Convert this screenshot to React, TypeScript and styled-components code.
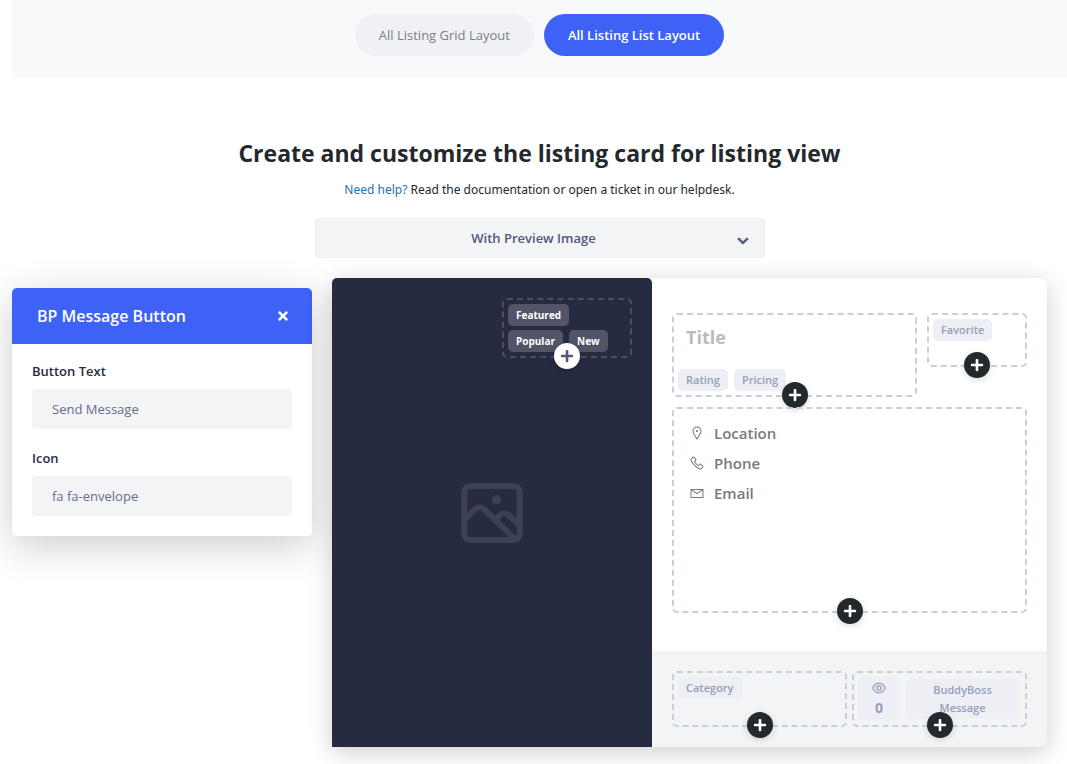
import React from 'react';
import styled, { createGlobalStyle, css } from 'styled-components';
import { FaChevronDown, FaPlus, FaTimes } from 'react-icons/fa';
import { LiaEnvelope, LiaMapMarkerSolid, LiaPhoneSolid } from 'react-icons/lia';

const GlobalStyle = createGlobalStyle`
  *, *::before, *::after { box-sizing: border-box; }
  body {
    margin: 0;
    background: #fff;
    color: #23282d;
    font-family: 'Segoe UI', 'Open Sans', 'Noto Sans', sans-serif;
    font-size: 13px;
  }
  button, input, select { font-family: inherit; margin: 0; }
`;

const Page = styled.main`
  padding-left: 12px;
`;

const Switcher = styled.nav`
  display: flex;
  justify-content: center;
  gap: 10px;
  padding: 14px 0 22px;
  background: #f8f9fb;
`;

const SwitchButton = styled.button<{ $active?: boolean }>`
  height: 42px;
  padding: 0 24px;
  border: 0;
  border-radius: 21px;
  font-size: 13px;
  line-height: 20px;
  cursor: pointer;
  ${({ $active }) =>
    $active
      ? css`background: #3e62f5; color: #fff; font-weight: 600;`
      : css`background: #f0f1f6; color: #7b7f85; font-weight: 500;`}
`;

const Intro = styled.header`
  display: flex;
  flex-direction: column;
  align-items: center;
  padding: 59px 20px 20px;
`;

const Heading = styled.h1`
  margin: 0;
  font-size: 23px;
  line-height: 32px;
  font-weight: 700;
  text-align: center;
`;

const Help = styled.p`
  margin: 11px 0 18px;
  font-family: 'Segoe UI', 'Noto Sans', sans-serif;
  font-size: 12px;
  line-height: 20px;
`;

const HelpLink = styled.a`
  color: #2271b1;
  text-decoration: none;
`;

const SelectWrap = styled.div`
  position: relative;
  width: 100%;
  max-width: 450px;
`;

const LayoutSelect = styled.select`
  appearance: none;
  display: block;
  width: 100%;
  height: 40px;
  padding: 0 28px 0 16px;
  border: 1px solid #eeeff4;
  border-radius: 4px;
  background: #f3f4f6;
  color: #51587c;
  font-size: 13px;
  font-weight: 600;
  text-align: center;
  text-align-last: center;
`;

const SelectArrow = styled(FaChevronDown)`
  position: absolute;
  right: 16px;
  top: 17px;
  width: 12px;
  height: 12px;
  color: #51587c;
  stroke: #51587c;
  stroke-width: 30px;
  pointer-events: none;
`;

const Workspace = styled.div`
  display: flex;
  align-items: flex-start;
  gap: 20px;
  padding: 0 20px 17px 0;
`;

const Panel = styled.section`
  flex: 0 0 300px;
  margin-top: 10px;
  border-radius: 5px;
  background: #fff;
  box-shadow: 0 10px 40px rgba(0, 0, 0, 0.2);
`;

const PanelHeader = styled.div`
  display: flex;
  align-items: center;
  justify-content: space-between;
  height: 56px;
  padding: 0 22px 0 25px;
  border-radius: 5px 5px 0 0;
  background: #3e62f5;
  color: #fff;
`;

const PanelTitle = styled.h2`
  margin: 0;
  font-size: 16px;
  line-height: 24px;
  font-weight: 600;
`;

const CloseButton = styled.button`
  display: flex;
  padding: 0;
  border: 0;
  background: none;
  color: inherit;
  font-size: 14px;
  cursor: pointer;
`;

const PanelBody = styled.form`
  display: flex;
  flex-direction: column;
  gap: 22px;
  padding: 20px;
`;

const Field = styled.div`
  display: flex;
  flex-direction: column;
  gap: 10px;
`;

const FieldLabel = styled.label`
  color: #272b41;
  font-size: 13px;
  line-height: 15px;
  font-weight: 600;
`;

const FieldInput = styled.input`
  width: 100%;
  height: 40px;
  padding: 0 20px;
  border: 0;
  border-radius: 4px;
  background: #f3f4f6;
  color: #666b8c;
  font-size: 13px;
`;

const Card = styled.section`
  flex: 1;
  min-width: 0;
  display: flex;
  border-radius: 8px;
  background: #fff;
  box-shadow: 0 5px 25px rgba(0, 0, 0, 0.2);
`;

const Thumbnail = styled.div`
  flex: 0 0 320px;
  display: grid;
  padding: 20px;
  border-radius: 5px 5px 0 0;
  background: #272b41;
  > * { grid-area: 1 / 1; }
`;

const Placeholder = styled.svg`
  place-self: center;
  width: 74px;
  height: 72px;
  fill: #3d4155;
`;

const Content = styled.div`
  flex: 1;
  min-width: 0;
  display: flex;
  flex-direction: column;
`;

const Body = styled.div`
  display: flex;
  flex-direction: column;
  gap: 10px;
  padding: 35px 20px 38px;
`;

const Row = styled.div<{ $gap: number }>`
  display: flex;
  align-items: flex-start;
  gap: ${({ $gap }) => $gap}px;
`;

const Footer = styled.div`
  padding: 20px;
  border-radius: 0 0 8px 0;
  background: #f3f4f6;
`;

const Zone = styled.div<{ $minHeight: number; $width?: number; $dark?: boolean }>`
  position: relative;
  ${({ $width }) => ($width ? `flex: 0 0 ${$width}px; width: ${$width}px;` : 'flex: 1 1 auto;')}
  min-width: 0;
  min-height: ${({ $minHeight }) => $minHeight}px;
  padding: 4px;
  border: 2px dashed ${({ $dark }) => ($dark ? '#4b4f63' : '#c6d0dc')};
  border-radius: 5px;
`;

const BadgeZone = styled(Zone)`
  place-self: start end;
`;

const TitleZone = styled(Zone)`
  display: flex;
  flex-direction: column;
  justify-content: space-between;
`;

const HalfZone = styled(Zone)`
  flex: 1 1 0;
`;

const Tags = styled.div`
  display: flex;
  flex-wrap: wrap;
  gap: 4px 6px;
`;

const Tag = styled.span<{ $dark?: boolean }>`
  padding: 0 8px;
  border-radius: 5px;
  line-height: 22px;
  ${({ $dark }) =>
    $dark
      ? css`background: #525567; color: #fff; font-size: 10px; font-weight: 700;`
      : css`background: #eeeff4; color: #959dbb; font-size: 11px; font-weight: 600;`}
`;

const AddButton = styled.button<{ $light?: boolean }>`
  position: absolute;
  left: 50%;
  bottom: -13px;
  display: flex;
  align-items: center;
  justify-content: center;
  width: 26px;
  height: 26px;
  padding: 0;
  border: 0;
  border-radius: 50%;
  transform: translateX(-50%);
  background: ${({ $light }) => ($light ? '#fff' : '#23282d')};
  color: ${({ $light }) => ($light ? '#51587c' : '#fff')};
  box-shadow: 0 2px 6px rgba(0, 0, 0, 0.15);
  font-size: 14px;
  cursor: pointer;
`;

const CardTitle = styled.h3`
  margin: 5px 0 0 8px;
  color: #bbb;
  font-size: 18px;
  line-height: 26px;
  font-weight: 700;
`;

const InfoList = styled.ul`
  margin: 0;
  padding: 5px 11px;
  list-style: none;
`;

const InfoItem = styled.li`
  display: flex;
  align-items: center;
  gap: 9px;
  color: #7a7a7a;
  font-size: 15px;
  line-height: 30px;
  font-weight: 600;
  svg { width: 16px; height: 16px; }
`;

const Actions = styled.div`
  display: flex;
  align-items: center;
  gap: 6px;
  padding-right: 2px;
`;

const Views = styled.div`
  display: flex;
  flex-direction: column;
  align-items: center;
  flex: 0 0 42px;
  height: 44px;
  padding-top: 3px;
  border-radius: 5px;
  background: #eeeff4;
  color: #959dbb;
  font-size: 14px;
  line-height: 18px;
  font-weight: 700;
  svg { width: 16px; height: 16px; margin-bottom: 3px; }
`;

const MessageTag = styled.div`
  flex: 1;
  padding: 2px 20px;
  border-radius: 5px;
  background: #eeeff4;
  color: #959dbb;
  font-size: 11px;
  line-height: 18px;
  font-weight: 600;
  text-align: center;
`;

const EyeIcon = () => (
  <svg viewBox="0 0 16 16" fill="none" stroke="currentColor" aria-hidden="true">
    <path d="M1.8 8C3 5 5.300 3.300 8 3.300S13 5 14.200 8C13 11 10.700 12.700 8 12.700S3 11 1.800 8Z" strokeWidth="1.300" />
    <circle cx="8" cy="8" r="2.200" strokeWidth="1.300" />
  </svg>
);

const Add = ({ light }: { light?: boolean }) => (
  <AddButton type="button" aria-label="Add element" $light={light}>
    <FaPlus />
  </AddButton>
);

const details = [
  { label: 'Location', Icon: LiaMapMarkerSolid },
  { label: 'Phone', Icon: LiaPhoneSolid },
  { label: 'Email', Icon: LiaEnvelope },
];

export default function App() {
  return (
    <>
      <GlobalStyle />
      <Page>
        <Switcher>
          <SwitchButton type="button">All Listing Grid Layout</SwitchButton>
          <SwitchButton type="button" $active>All Listing List Layout</SwitchButton>
        </Switcher>

        <Intro>
          <Heading>Create and customize the listing card for listing view</Heading>
          <Help>
            <HelpLink href="#help">Need help?</HelpLink> Read the documentation or open a ticket in our helpdesk.
          </Help>
          <SelectWrap>
            <LayoutSelect aria-label="Card layout" defaultValue="preview">
              <option value="preview">With Preview Image</option>
            </LayoutSelect>
            <SelectArrow />
          </SelectWrap>
        </Intro>

        <Workspace>
          <Panel>
            <PanelHeader>
              <PanelTitle>BP Message Button</PanelTitle>
              <CloseButton type="button" aria-label="Close"><FaTimes /></CloseButton>
            </PanelHeader>
            <PanelBody>
              <Field>
                <FieldLabel htmlFor="button-text">Button Text</FieldLabel>
                <FieldInput id="button-text" type="text" defaultValue="Send Message" />
              </Field>
              <Field>
                <FieldLabel htmlFor="button-icon">Icon</FieldLabel>
                <FieldInput id="button-icon" type="text" defaultValue="fa fa-envelope" />
              </Field>
            </PanelBody>
          </Panel>

          <Card>
            <Thumbnail>
              <Placeholder viewBox="0 0 24 24" preserveAspectRatio="none" aria-hidden="true">
                <path d="M19,2H5A3,3,0,0,0,2,5V19a3,3,0,0,0,3,3H19a2.81,2.81,0,0,0,.49-.05l.3-.07.07,0h0l.05,0,.37-.14.13-.07c.1-.06.21-.11.31-.18a3.79,3.79,0,0,0,.38-.32l.07-.09a2.69,2.69,0,0,0,.27-.32l.09-.13a2.31,2.31,0,0,0,.18-.35,1,1,0,0,0,.07-.15c.05-.12.08-.25.12-.38l0-.15A2.6,2.6,0,0,0,22,19V5A3,3,0,0,0,19,2ZM5,20a1,1,0,0,1-1-1V14.69l3.29-3.3h0a1,1,0,0,1,1.42,0L17.31,20Zm15-1a1,1,0,0,1-.07.36,1,1,0,0,1-.08.14.94.94,0,0,1-.09.12l-5.35-5.35.88-.88a1,1,0,0,1,1.42,0h0L20,16.69Zm0-5.14L18.12,12a3.08,3.08,0,0,0-4.24,0l-.88.88L10.12,10a3.08,3.08,0,0,0-4.24,0L4,11.86V5A1,1,0,0,1,5,4H19a1,1,0,0,1,1,1ZM13.5,6A1.5,1.5,0,1,0,15,7.5,1.5,1.5,0,0,0,13.5,6Z" />
              </Placeholder>
              <BadgeZone $minHeight={60} $width={130} $dark>
                <Tags>
                  <Tag $dark>Featured</Tag>
                  <Tag $dark>Popular</Tag>
                  <Tag $dark>New</Tag>
                </Tags>
                <Add light />
              </BadgeZone>
            </Thumbnail>

            <Content>
              <Body>
                <Row $gap={10}>
                  <TitleZone $minHeight={84}>
                    <CardTitle>Title</CardTitle>
                    <Tags>
                      <Tag>Rating</Tag>
                      <Tag>Pricing</Tag>
                    </Tags>
                    <Add />
                  </TitleZone>
                  <Zone $minHeight={54} $width={100}>
                    <Tags><Tag>Favorite</Tag></Tags>
                    <Add />
                  </Zone>
                </Row>
                <Zone $minHeight={206}>
                  <InfoList>
                    {details.map(({ label, Icon }) => (
                      <InfoItem key={label}><Icon />{label}</InfoItem>
                    ))}
                  </InfoList>
                  <Add />
                </Zone>
              </Body>
              <Footer>
                <Row $gap={5}>
                  <HalfZone $minHeight={56}>
                    <Tags><Tag>Category</Tag></Tags>
                    <Add />
                  </HalfZone>
                  <HalfZone $minHeight={56}>
                    <Actions>
                      <Views><EyeIcon />0</Views>
                      <MessageTag>BuddyBoss Message</MessageTag>
                    </Actions>
                    <Add />
                  </HalfZone>
                </Row>
              </Footer>
            </Content>
          </Card>
        </Workspace>
      </Page>
    </>
  );
}
